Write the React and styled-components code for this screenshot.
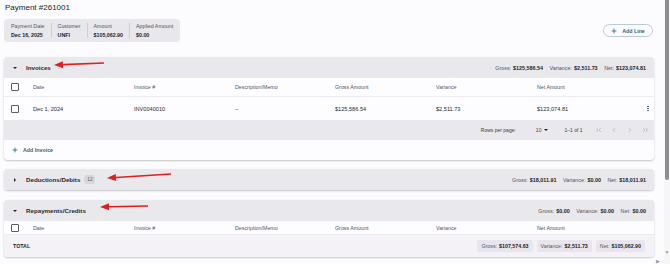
import React from 'react';
import styled, { createGlobalStyle } from 'styled-components';

const GlobalStyle = createGlobalStyle`
  html, body {
    margin: 0;
    padding: 0;
    background: #fcfbfd;
    overflow: hidden;
  }
  body {
    font-family: "Liberation Sans", Arial, sans-serif;
    color: #1e1e22;
  }
`;

const Page = styled.div`
  display: flex;
  height: 264px;
  position: relative;
`;

const Main = styled.div`
  flex: 1;
  padding: 3px 10px 0 4px;
  display: flex;
  flex-direction: column;
`;

const Title = styled.div`
  font-size: 8px;
  line-height: 10px;
  padding-left: 1px;
  color: #222;
`;

const TopRow = styled.div`
  display: flex;
  justify-content: space-between;
  align-items: center;
  margin-top: 6px;
`;

const SummaryBox = styled.div`
  display: flex;
  background: #e8e7ec;
  border-radius: 4px;
  height: 23px;
  align-items: center;
  padding: 0 1px;
`;

const SummaryItem = styled.div`
  padding: 0 6px;
  border-left: ${p => (p.$first ? 'none' : '1px solid #cfced4')};
  display: flex;
  flex-direction: column;
  gap: 3px;
  line-height: 6px;
`;

const Label = styled.span`
  font-size: 5.3px;
  color: #55555c;
`;

const Value = styled.span`
  font-size: 5.3px;
  font-weight: 700;
  color: #1e1e22;
`;

const PillButton = styled.button`
  display: flex;
  align-items: center;
  gap: 5px;
  height: 13px;
  width: 50px;
  justify-content: center;
  border: 1px solid #b9ccd6;
  border-radius: 7px;
  background: transparent;
  color: #27697f;
  font-family: inherit;
  font-size: 5.3px;
  font-weight: 700;
  padding: 0;
  margin-right: 1px;
`;

const Panel = styled.div`
  margin-top: ${p => p.$mt}px;
  border-radius: 4px;
  background: #fdfcff;
  box-shadow: 0 1px 2px rgba(0, 0, 0, 0.22);
  overflow: hidden;
`;

const PanelHeader = styled.div`
  display: flex;
  align-items: center;
  height: ${p => p.$h || 21}px;
  background: #e9e8ec;
  padding: 0 8px 0 9px;
`;

const Caret = styled.span`
  width: 0;
  height: 0;
  border-left: 2px solid transparent;
  border-right: 2px solid transparent;
  border-top: 2.5px solid #222;
  margin-right: ${p => (p.$plain ? 0 : 9)}px;
  ${p => p.$closed && 'transform: rotate(-90deg);'}
`;

const PanelTitle = styled.span`
  font-size: 6.2px;
  font-weight: 700;
  color: #2a2a30;
`;

const Badge = styled.span`
  margin-left: 4px;
  background: #d8d7dc;
  border-radius: 3px;
  font-size: 4.6px;
  color: #555;
  padding: 2px 3px;
  line-height: 5px;
`;

const Totals = styled.div`
  margin-left: auto;
  display: flex;
  gap: 6.5px;
  font-size: 5.4px;
  color: #55555c;
`;

const TotalPart = styled.span`
  b {
    color: #1e1e22;
    margin-left: 2px;
  }
`;

const Row = styled.div`
  display: grid;
  grid-template-columns: 22px 101px 101px 100px 101px 101px 1fr 12px;
  align-items: center;
  height: ${p => p.$h}px;
  padding-left: 7px;
  background: #fdfcff;
  border-bottom: ${p => (p.$line ? '1px solid #ecebef' : 'none')};
  font-size: ${p => (p.$head ? '5.3px' : '5.6px')};
  color: ${p => (p.$head ? '#55555c' : '#2a2a30')};
  box-sizing: border-box;
`;

const Check = styled.span`
  width: 6px;
  height: 6px;
  border: 1px solid #5a5a60;
  border-radius: 1px;
`;

const Kebab = styled.span`
  display: flex;
  flex-direction: column;
  gap: 1px;
  align-items: center;
  span {
    width: 1.3px;
    height: 1.3px;
    border-radius: 50%;
    background: #27697f;
  }
`;

const Pager = styled.div`
  display: flex;
  align-items: center;
  justify-content: flex-end;
  height: 20px;
  background: #e9e8ec;
  padding-right: 6px;
  font-size: 5px;
  color: #3a3a40;
`;

const PagerLabel = styled.span`
  margin-right: 20px;
`;

const PageSize = styled.span`
  display: flex;
  align-items: center;
  gap: 3px;
  margin-right: 16px;
`;

const PagerIcons = styled.div`
  display: flex;
  gap: 9.5px;
  margin-left: 13px;
  color: #b2b1b8;
`;

const AddRow = styled.div`
  display: flex;
  align-items: center;
  height: 20px;
  padding-left: 8px;
  gap: 5px;
  color: #27697f;
  font-size: 5.3px;
  font-weight: 700;
`;

const TotalRow = styled.div`
  display: flex;
  align-items: center;
  height: 22px;
  background: #f4f2f7;
  padding: 0 9px;
`;

const TotalLabel = styled.span`
  font-size: 5.3px;
  font-weight: 700;
`;

const Chips = styled.div`
  margin-left: auto;
  display: flex;
  gap: 4px;
`;

const Chip = styled.span`
  background: #e8e6ec;
  border-radius: 2px;
  padding: 3px 4px;
  font-size: 5.3px;
  color: #55555c;
  b {
    color: #1e1e22;
    margin-left: 2px;
  }
`;

const ScrollTrack = styled.div`
  width: 6px;
  background: #f6f6f6;
  display: flex;
  flex-direction: column;
  align-items: center;
`;

const Thumb = styled.div`
  width: 4px;
  height: 180px;
  background: #8d8d8d;
  border-radius: 0 0 2px 2px;
`;

const ScrollArrow = styled.span`
  margin-top: auto;
  margin-bottom: 9px;
  font-size: 5px;
  color: #9a9a9a;
`;

const HArrow = styled.span`
  position: absolute;
  right: 10px;
  bottom: 0;
  font-size: 5px;
  color: #9a9a9a;
`;

const Overlay = styled.svg`
  position: absolute;
  left: 0;
  top: 0;
  pointer-events: none;
`;

function Plus({ size = 6 }) {
  return (
    <svg width={size} height={size} viewBox="0 0 10 10">
      <path d="M5 1v8M1 5h8" stroke="currentColor" strokeWidth="1.4" />
    </svg>
  );
}

const pagerPaths = {
  first: 'M2 2v6M8 2L5 5l3 3',
  prev: 'M6.5 2L3.5 5l3 3',
  next: 'M3.5 2l3 3-3 3',
  last: 'M8 2v6M2 2l3 3-3 3',
};

function PagerIcon({ kind }) {
  return (
    <svg width="6" height="6" viewBox="0 0 10 10">
      <path d={pagerPaths[kind]} fill="none" stroke="currentColor" strokeWidth="1.2" />
    </svg>
  );
}

function Arrow({ x1, y1, x2, y2 }) {
  const dx = x2 - x1;
  const dy = y2 - y1;
  const len = Math.hypot(dx, dy);
  const ux = dx / len;
  const uy = dy / len;
  const hx = x2 - ux * 9;
  const hy = y2 - uy * 9;
  const px = -uy * 3.5;
  const py = ux * 3.5;
  return (
    <g>
      <line x1={x1} y1={y1} x2={hx} y2={hy} stroke="#e0201f" strokeWidth="1.6" />
      <polygon points={`${x2},${y2} ${hx + px},${hy + py} ${hx - px},${hy - py}`} fill="#e0201f" />
    </g>
  );
}

const columns = ['Date', 'Invoice #', 'Description/Memo', 'Gross Amount', 'Variance', 'Net Amount'];

function HeadRow({ h }) {
  return (
    <Row $h={h} $head $line>
      <Check />
      {columns.map(c => <span key={c}>{c}</span>)}
      <span />
    </Row>
  );
}

function SectionTotals({ gross, variance, net }) {
  return (
    <Totals>
      <TotalPart>Gross:<b>{gross}</b></TotalPart>
      <TotalPart>Variance:<b>{variance}</b></TotalPart>
      <TotalPart>Net:<b>{net}</b></TotalPart>
    </Totals>
  );
}

export default function App() {
  return (
    <>
      <GlobalStyle />
      <Page>
        <Main>
          <Title>Payment #261001</Title>
          <TopRow>
            <SummaryBox>
              <SummaryItem $first><Label>Payment Date</Label><Value>Dec 16, 2025</Value></SummaryItem>
              <SummaryItem><Label>Customer</Label><Value>UNFI</Value></SummaryItem>
              <SummaryItem><Label>Amount</Label><Value>$105,062.90</Value></SummaryItem>
              <SummaryItem><Label>Applied Amount</Label><Value>$0.00</Value></SummaryItem>
            </SummaryBox>
            <PillButton><Plus />Add Line</PillButton>
          </TopRow>

          <Panel $mt={15}>
            <PanelHeader>
              <Caret />
              <PanelTitle>Invoices</PanelTitle>
              <SectionTotals gross="$125,586.54" variance="$2,511.73" net="$123,074.81" />
            </PanelHeader>
            <HeadRow h={19} />
            <Row $h={23}>
              <Check />
              <span>Dec 1, 2024</span>
              <span>INV0040010</span>
              <span>--</span>
              <span>$125,586.54</span>
              <span>$2,511.73</span>
              <span>$123,074.81</span>
              <Kebab><span /><span /><span /></Kebab>
            </Row>
            <Pager>
              <PagerLabel>Rows per page:</PagerLabel>
              <PageSize>10 <Caret $plain /></PageSize>
              <span>1–1 of 1</span>
              <PagerIcons>
                <PagerIcon kind="first" />
                <PagerIcon kind="prev" />
                <PagerIcon kind="next" />
                <PagerIcon kind="last" />
              </PagerIcons>
            </Pager>
            <AddRow><Plus />Add Invoice</AddRow>
          </Panel>

          <Panel $mt={9}>
            <PanelHeader>
              <Caret $closed />
              <PanelTitle>Deductions/Debits</PanelTitle>
              <Badge>12</Badge>
              <SectionTotals gross="$18,011.91" variance="$0.00" net="$18,011.91" />
            </PanelHeader>
          </Panel>

          <Panel $mt={10}>
            <PanelHeader>
              <Caret />
              <PanelTitle>Repayments/Credits</PanelTitle>
              <SectionTotals gross="$0.00" variance="$0.00" net="$0.00" />
            </PanelHeader>
            <HeadRow h={14} />
            <TotalRow>
              <TotalLabel>TOTAL</TotalLabel>
              <Chips>
                <Chip>Gross:<b>$107,574.63</b></Chip>
                <Chip>Variance:<b>$2,511.73</b></Chip>
                <Chip>Net:<b>$105,062.90</b></Chip>
              </Chips>
            </TotalRow>
          </Panel>
        </Main>
        <ScrollTrack>
          <Thumb />
          <ScrollArrow>▼</ScrollArrow>
        </ScrollTrack>
        <HArrow>▶</HArrow>
        <Overlay width="670" height="264">
          <Arrow x1={104} y1={63} x2={54} y2={65} />
          <Arrow x1={171} y1={174} x2={107} y2={178} />
          <Arrow x1={148} y1={206} x2={100} y2={207} />
        </Overlay>
      </Page>
    </>
  );
}
